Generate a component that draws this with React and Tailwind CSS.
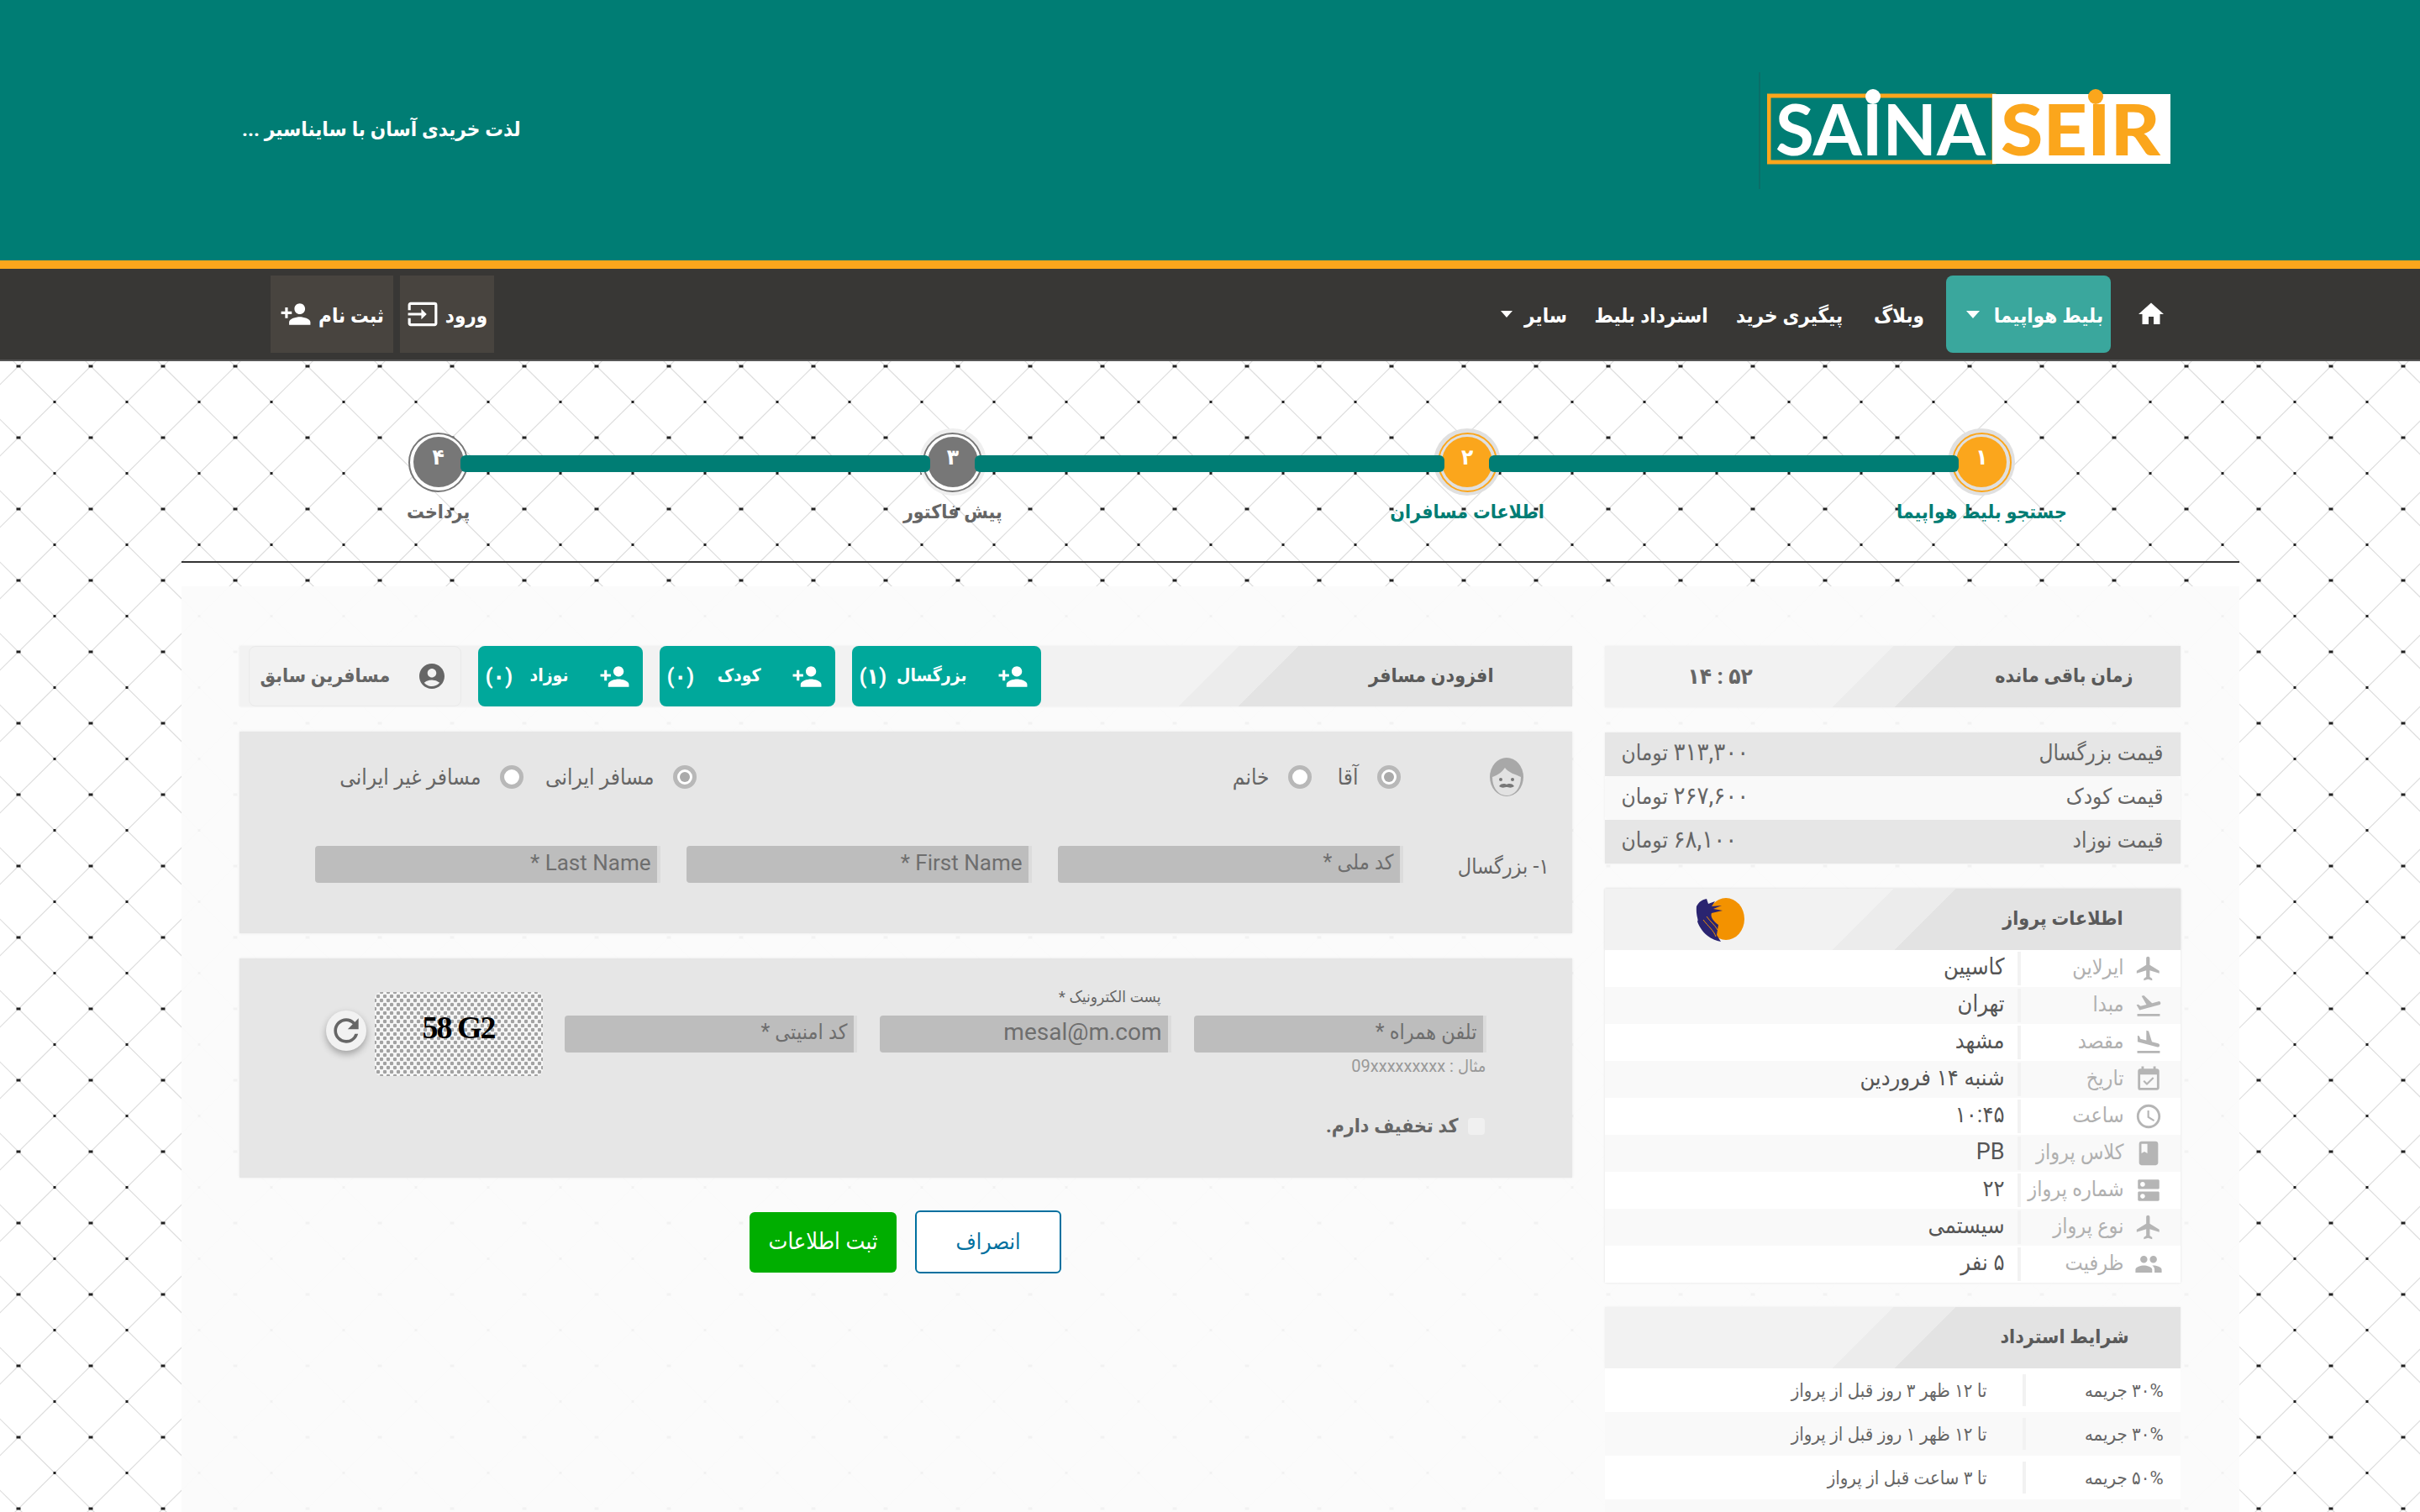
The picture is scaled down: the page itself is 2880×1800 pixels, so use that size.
import React from "react";
import { MdHome, MdPersonAdd, MdAccountCircle, MdInput, MdFlight, MdFlightTakeoff, MdFlightLand, MdEventAvailable, MdAccessTime, MdBook, MdDns, MdPeople, MdRefresh } from "react-icons/md";

const Caret = ({ className }) => (
  <svg viewBox="0 0 16 9" className={className}><polygon points="0,0 16,0 8,9" fill="currentColor" /></svg>
);

function PagePattern() {
  return (
    <svg className="absolute inset-0 w-full h-full" aria-hidden="true">
      <defs>
        <pattern id="tile" patternUnits="userSpaceOnUse" width="86" height="85">
          <path
            d="M-21 -36.5L22 6L65 48.5L108 91M-21 48.5L22 91M65 -36.5L108 6M65 -36.5L22 6L-21 48.5M108 6L65 48.5L22 91"
            stroke="#dedede" strokeWidth="1.2" fill="none"
          />
          <rect x="19.5" y="4.5" width="5" height="3" fill="#222" />
          <rect x="63.5" y="47" width="3" height="3" fill="#222" />
        </pattern>
      </defs>
      <rect width="100%" height="100%" fill="url(#tile)" />
    </svg>
  );
}

function Logo() {
  return (
    <svg width="480" height="106" viewBox="0 -6 480 106">
      <rect x="2" y="8" width="268" height="79" fill="none" stroke="#fba61c" strokeWidth="5" />
      <rect x="268" y="6" width="212" height="83" fill="#fff" />
      <text x="10" y="79" fontFamily="Lato, sans-serif" fontWeight="700" fontSize="84" fill="#fff" textLength="250" lengthAdjust="spacingAndGlyphs">SAINA</text>
      <text x="278" y="79" fontFamily="Lato, sans-serif" fontWeight="900" fontSize="84" fill="#fba61c" textLength="190" lengthAdjust="spacingAndGlyphs">SEIR</text>
      <circle cx="126" cy="9" r="9" fill="#fff" />
      <circle cx="391" cy="9" r="9" fill="#fba61c" />
    </svg>
  );
}

function Step({ n, label, variant, bar }) {
  const ring =
    variant === "done"
      ? "bg-[#e0e0e0]"
      : variant === "cur"
      ? "bg-[#efefef]"
      : "";
  const inner = variant === "done" ? "border-[#fba61c] bg-[#e0e0e0]" : "border-[#777] bg-white";
  const fill = variant === "done" ? "bg-[#fba61c]" : "bg-[#777]";
  const labelColor = variant === "done" ? "text-[#007d74]" : "text-[#666]";
  return (
    <div className="relative flex flex-col items-center">
      <div className={`relative w-20 h-20 rounded-full flex items-center justify-center ${ring}`}>
        <div className={`w-[71px] h-[71px] rounded-full border-2 flex items-center justify-center ${inner}`}>
          <div className={`w-[60px] h-[60px] rounded-full flex items-center justify-center text-white font-bold text-[26px] pb-3 ${fill}`}>{n}</div>
        </div>
      </div>
      {bar && <div className="absolute z-10 top-[32px] right-[calc(50%+27px)] w-[559px] h-5 rounded-md bg-[#007d74]" />}
      <div className={`mt-[5px] text-[23px] leading-[30px] font-bold whitespace-nowrap ${labelColor}`}>{label}</div>
    </div>
  );
}

function CardHead({ title, children, pr, grad }) {
  return (
    <div className={`h-[73px] flex items-center justify-between text-[#5a5a5a] shadow-[0_0_3px_rgba(0,0,0,.06)] ${pr} ${grad}`}>
      <span className="font-bold text-[23px] whitespace-nowrap">{title}</span>
      {children}
    </div>
  );
}
const GRAD = "bg-[linear-gradient(135deg,#f2f2f2_243px,#ececec_243px,#ececec_295px,#e3e3e3_295px)]";

const PRICES = [
  ["قیمت بزرگسال", "۳۱۳,۳۰۰", "bg-[#e6e6e6]"],
  ["قیمت کودک", "۲۶۷,۶۰۰", "bg-[#f9f9f9] rounded-md"],
  ["قیمت نوزاد", "۶۸,۱۰۰", "bg-[#e6e6e6]"],
];

const FLIGHT = [
  [MdFlight, "ایرلاین", "کاسپین"],
  [MdFlightTakeoff, "مبدا", "تهران"],
  [MdFlightLand, "مقصد", "مشهد"],
  [MdEventAvailable, "تاریخ", "شنبه ۱۴ فروردین"],
  [MdAccessTime, "ساعت", "۱۰:۴۵"],
  [MdBook, "کلاس پرواز", "PB"],
  [MdDns, "شماره پرواز", "۲۲"],
  [MdFlight, "نوع پرواز", "سیستمی"],
  [MdPeople, "ظرفیت", "۵ نفر"],
];

const REFUND = [
  ["۳۰% جریمه", "تا ۱۲ ظهر ۳ روز قبل از پرواز"],
  ["۳۰% جریمه", "تا ۱۲ ظهر ۱ روز قبل از پرواز"],
  ["۵۰% جریمه", "تا ۳ ساعت قبل از پرواز"],
];

function AirlineLogo() {
  return (
    <svg width="60" height="52" viewBox="0 0 60 52">
      <ellipse cx="37" cy="25" rx="22" ry="25" fill="#f39200" />
      <path d="M2 10C5 4 9 2 14 1L16 7L24 4L20 10L32 9L22 13L33 15L20 18C18 22 22 28 28 32L26 44L31 52C19 50 8 42 3 28C5 26 1 22 2 10Z" fill="#2a2470" />
      <path d="M10 26C16 34 22 38 25 46M14 22C18 28 24 32 27 38" stroke="#f39200" strokeWidth="1" fill="none" />
    </svg>
  );
}

function Avatar() {
  return (
    <svg width="42" height="48" viewBox="0 0 42 48">
      <ellipse cx="21" cy="24" rx="20" ry="23" fill="#a8a8a8" />
      <path d="M4 24C9 22 14 20 19 13C23 19 32 21 38 24C38 38 30 46 21 46C12 46 4 38 4 24Z" fill="#e2e2e2" />
      <circle cx="14" cy="27" r="2" fill="#777" />
      <circle cx="28" cy="27" r="2" fill="#777" />
      <path d="M12 35C15 31 19 32 21 33C23 32 27 31 30 35C26 38 23 36 21 36C19 36 16 38 12 35Z" fill="#777" />
    </svg>
  );
}

function Radio({ on }) {
  return (
    <span className="w-7 h-7 rounded-full border-[5px] border-[#b8b8b8] bg-white flex items-center justify-center shrink-0">
      {on && <span className="w-[12px] h-[12px] rounded-full bg-[#aaa]" />}
    </span>
  );
}

function Field({ text, w, size = "text-[25px]" }) {
  return (
    <div className={`h-[44px] shrink-0 bg-[#bdbdbd] rounded-l-sm border-r-4 border-[#dcdcdc] pr-[7px] pb-[4px] flex items-center text-[#6e6e6e] whitespace-nowrap overflow-hidden ${size} ${w}`}>
      {text}
    </div>
  );
}

function AddBtn({ label, count, w }) {
  return (
    <div className={`h-[72px] rounded-lg bg-[#00a89b] text-white flex items-center pr-[15px] pl-[9px] font-bold text-[21px] shrink-0 whitespace-nowrap ${w}`}>
      <MdPersonAdd className="text-[37px] ml-[36px] shrink-0" />
      <span>{label}</span>
      <span className="mr-auto text-[26px]">{count}</span>
    </div>
  );
}

export default function App() {
  return (
    <div dir="rtl" className="relative w-[2880px] h-[1800px] overflow-hidden bg-white font-[Roboto,'DejaVu_Sans_Condensed','DejaVu_Sans',sans-serif]">
      <header dir="ltr" className="h-[320px] bg-[#007d74] border-b-[10px] border-[#fba61c] flex justify-between pl-[288px] pr-[297px]">
        <div dir="rtl" className="pt-[132px] text-white font-bold text-[24px] leading-[44px] whitespace-nowrap">لذت خریدی آسان با سایناسیر ...</div>
        <div className="flex items-start">
          <div className="mt-[86px] mr-[8px] w-[2px] h-[139px] bg-[#0a6f68]" />
          <div className="pt-[100px]"><Logo /></div>
        </div>
      </header>

      <nav className="h-[110px] bg-[#383735] border-b-2 border-[#555] flex items-center pr-[305px] text-white font-bold text-[24px]">
        <div className="w-[63px] flex justify-start shrink-0"><MdHome className="text-[36px] -mr-[3px]" /></div>
        <div className="w-[196px] h-[92px] bg-[#3aa79d] rounded-lg flex items-center justify-between pr-[9px] pl-[24px] shrink-0 whitespace-nowrap">
          <span className="pt-[4px]">بلیط هواپیما</span>
          <Caret className="w-4 h-[9px]" />
        </div>
        <div className="w-[112px] pt-[4px] text-center shrink-0 whitespace-nowrap">وبلاگ</div>
        <div className="w-[149px] pt-[4px] text-center shrink-0 whitespace-nowrap">پیگیری خرید</div>
        <div className="w-[180px] pt-[4px] text-center shrink-0 whitespace-nowrap">استرداد بلیط</div>
        <div className="w-[95px] flex items-center justify-between pr-[10px] pl-[6px] shrink-0 whitespace-nowrap">
          <span className="pt-[4px]">سایر</span>
          <Caret className="w-[14px] h-2" />
        </div>
        <div className="flex-1" />
        <div className="w-[112px] h-[92px] bg-[#48443f] flex items-center justify-center gap-[8px] shrink-0 whitespace-nowrap">
          <span className="pt-[4px]">ورود</span>
          <MdInput className="text-[38px]" />
        </div>
        <div className="w-[146px] h-[92px] mr-2 ml-[322px] bg-[#48443f] flex items-center justify-center gap-[8px] shrink-0 whitespace-nowrap">
          <span className="pt-[4px]">ثبت نام</span>
          <MdPersonAdd className="text-[38px]" />
        </div>
      </nav>

      <main className="relative h-[1370px]">
        <PagePattern />
        <div className="relative w-[2449px] mx-auto">
          <div className="grid grid-cols-4 pt-[80px] h-[240px] border-b-2 border-[#333]">
            <Step n="۱" label="جستجو بلیط هواپیما" variant="done" bar />
            <Step n="۲" label="اطلاعات مسافران" variant="done" bar />
            <Step n="۳" label="پیش فاکتور" variant="cur" bar />
            <Step n="۴" label="پرداخت" variant="next" />
          </div>

          <div className="mt-[28px] bg-[#fbfbfb]/[0.96] pt-[71px] pr-[70px] pl-[69px] flex gap-[39px]">
            <aside className="w-[685px] shrink-0 flex flex-col gap-[30px]">
              <CardHead title="زمان باقی مانده" grad={GRAD} pr="pr-[56px]">
                <span dir="ltr" className="ml-[99px] text-[26px] text-[#666] font-bold">۱۴ : ۵۲</span>
              </CardHead>

              <div className="flex flex-col shadow-[0_0_3px_rgba(0,0,0,.06)]">
                {PRICES.map(([a, b, c]) => (
                  <div key={a} className={`h-[52px] flex items-center justify-between px-[20px] pb-[4px] text-[26px] text-[#666] ${c}`}>
                    <span>{a}</span>
                    <span className="whitespace-nowrap"><span className="text-[29px] tracking-[1px]">{b}</span> تومان</span>
                  </div>
                ))}
              </div>

              <div className="shadow-[0_0_3px_rgba(0,0,0,.1)]">
                <CardHead title="اطلاعات پرواز" grad={GRAD} pr="pr-[68px]">
                  <span className="ml-[107px] flex"><AirlineLogo /></span>
                </CardHead>
                {FLIGHT.map(([Icon, a, b], i) => (
                  <div key={i} className={`h-[44px] flex items-center ${i % 2 ? "bg-[#f9f9f9]" : "bg-white"}`}>
                    <div className="w-[194px] h-[40px] shrink-0 flex items-center gap-[12px] pr-[21px] border-l-4 border-[#f2f2f2] text-[25px] text-[#b0b0b0] whitespace-nowrap">
                      <Icon className="text-[34px] text-[#b5b5b5] shrink-0" />
                      <span className="pb-[3px]">{a}</span>
                    </div>
                    <div className="pr-[15px] pb-[3px] text-[27px] text-[#555] whitespace-nowrap">{b}</div>
                  </div>
                ))}
              </div>

              <div className="-mt-[1px]">
                <CardHead title="شرایط استرداد" grad={GRAD} pr="pr-[61px]" />
                {REFUND.map(([a, b], i) => (
                  <div key={i} className={`h-[52px] flex items-center ${i % 2 ? "bg-[#f9f9f9]" : "bg-white"}`}>
                    <div className="w-[188px] h-[38px] shrink-0 flex items-center pr-[20px] border-l-4 border-[#f2f2f2] text-[22px] text-[#666] whitespace-nowrap">{a}</div>
                    <div className="pr-[42px] text-[22px] text-[#666] whitespace-nowrap">{b}</div>
                  </div>
                ))}
                <div className="h-[52px] bg-[#f9f9f9]" />
              </div>
            </aside>

            <section className="w-[1586px] shrink-0 flex flex-col gap-[30px]">
              <div className="h-[72px] flex items-center justify-between text-[#5a5a5a] bg-[linear-gradient(135deg,#f2f2f2_841px,#ececec_841px,#ececec_891px,#e3e3e3_891px)] shadow-[0_0_3px_rgba(0,0,0,.06)] pr-[93px] pl-[11px]">
                <span className="font-bold text-[23px] whitespace-nowrap">افزودن مسافر</span>
                <div className="flex items-center gap-[20px]">
                  <AddBtn label="بزرگسال" count="(۱)" w="w-[225px]" />
                  <AddBtn label="کودک" count="(۰)" w="w-[209px]" />
                  <AddBtn label="نوزاد" count="(۰)" w="w-[196px]" />
                  <div className="w-[253px] h-[72px] rounded-lg bg-[#f2f2f2] border border-[#eaeaea] flex items-center justify-between pr-[16px] pl-[13px] text-[#666] font-bold text-[23px] whitespace-nowrap">
                    <MdAccountCircle className="text-[36px]" />
                    <span>مسافرین سابق</span>
                  </div>
                </div>
              </div>

              <div className="h-[240px] bg-[#e6e6e6] shadow-[0_0_3px_rgba(0,0,0,.08)] text-[#666] text-[26px]">
                <div className="flex items-center h-[108px] pr-[57px]">
                  <div className="w-[42px] ml-[105px] shrink-0 flex"><Avatar /></div>
                  <div className="flex items-center w-[106px] shrink-0 gap-[22px]"><Radio on /><span>آقا</span></div>
                  <div className="flex items-center w-[732px] shrink-0 gap-[22px]"><Radio /><span>خانم</span></div>
                  <div className="flex items-center w-[206px] shrink-0 gap-[22px] whitespace-nowrap"><Radio on /><span>مسافر ایرانی</span></div>
                  <div className="flex items-center gap-[22px] whitespace-nowrap"><Radio /><span>مسافر غیر ایرانی</span></div>
                </div>
                <div className="flex items-center pr-[27px] mt-[28px]">
                  <div className="w-[174px] shrink-0 whitespace-nowrap pt-[6px] text-[25px]">۱- بزرگسال</div>
                  <div className="flex gap-[31px]">
                    <Field text="کد ملی *" w="w-[411px]" />
                    <Field text="First Name *" w="w-[411px]" size="text-[26px]" />
                    <Field text="Last Name *" w="w-[411px]" size="text-[26px]" />
                  </div>
                </div>
              </div>

              <div className="h-[261px] bg-[#e6e6e6] shadow-[0_0_3px_rgba(0,0,0,.08)] pr-[102px] text-[#666]">
                <div className="flex items-start pt-[40px]">
                  <div className="w-[348px] shrink-0 pt-[28px]">
                    <Field text="تلفن همراه *" w="w-[348px]" />
                    <div className="text-[20px] leading-[28px] text-[#999] pt-[2px] whitespace-nowrap">مثال : 09xxxxxxxxx</div>
                  </div>
                  <div className="w-[348px] shrink-0 mr-[27px]">
                    <div className="h-[28px] leading-[12px] text-[19px] pr-[12px] whitespace-nowrap">پست الکترونیک *</div>
                    <Field text={<span dir="ltr">mesal@m.com</span>} w="w-[347px]" size="text-[28px]" />
                  </div>
                  <div className="w-[348px] shrink-0 mr-[26px] pt-[28px]">
                    <Field text="کد امنیتی *" w="w-[348px]" />
                  </div>
                  <div className="w-[200px] h-[100px] shrink-0 mr-[26px] rounded-lg flex items-center justify-center bg-[#f6f6f6] bg-[radial-gradient(circle,#a2a2a2_2px,transparent_2.6px),radial-gradient(circle,#a2a2a2_2px,transparent_2.6px)] bg-[size:8px_10px] bg-[position:0_0,4px_5px]">
                    <span className="font-['Liberation_Serif',serif] font-bold text-[38px] leading-none text-black pb-4 tracking-[-2px]" dir="ltr">58 G2</span>
                  </div>
                  <div className="w-[48px] h-[48px] mr-[10px] mt-[22px] shrink-0 rounded-full bg-[#f2f2f2] shadow-[0_4px_8px_rgba(0,0,0,.3)] flex items-center justify-center">
                    <MdRefresh className="text-[44px] text-[#666]" />
                  </div>
                </div>
                <div className="flex items-center gap-[11px] mt-[41px] mr-[2px]">
                  <span className="w-5 h-5 bg-[#f0f0f0] rounded-sm" />
                  <span className="font-bold text-[23px] whitespace-nowrap">کد تخفیف دارم.</span>
                </div>
              </div>

              <div className="flex items-center justify-center mt-[9px] gap-[22px]">
                <div className="w-[174px] h-[75px] bg-white border-2 border-[#00709f] rounded-md flex items-center justify-center text-[#00709f] text-[26px]">انصراف</div>
                <div className="w-[175px] h-[72px] bg-[#00ae00] rounded-md flex items-center justify-center text-white text-[27px] whitespace-nowrap">ثبت اطلاعات</div>
              </div>
            </section>
          </div>
        </div>
      </main>
    </div>
  );
}
